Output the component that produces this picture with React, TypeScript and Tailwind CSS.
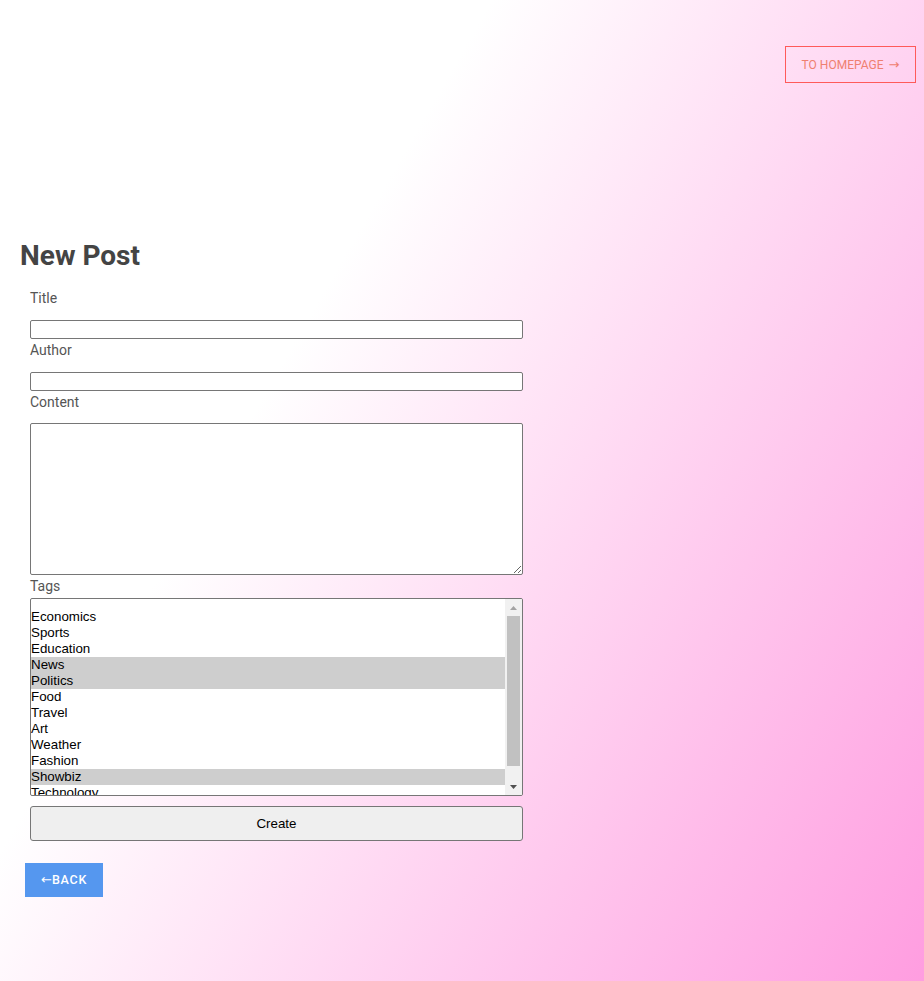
import React from "react";

const TAGS = [
  "Economics",
  "Sports",
  "Education",
  "News",
  "Politics",
  "Food",
  "Travel",
  "Art",
  "Weather",
  "Fashion",
  "Showbiz",
  "Technology",
];

const SELECTED = ["News", "Politics", "Showbiz"];

export default function App() {
  return (
    <div
      className="min-h-[981px] w-full bg-[linear-gradient(120deg,#ffffff_33%,#ff9de0_100%)]"
      style={{ fontFamily: "Roboto, 'Liberation Sans', sans-serif" }}
    >
      {/* top bar */}
      <div className="flex justify-end pt-[46px] pr-[8px]">
        <button className="h-[37px] w-[131px] border border-[#ff5a5a] text-[12px] text-[#ef8070] uppercase flex items-center justify-center gap-[5px]">
          To homepage{" "}
          <span className="text-[13px]" style={{ fontFamily: "'DejaVu Sans', sans-serif" }}>
            →
          </span>
        </button>
      </div>

      <h1 className="mt-[156px] ml-[20px] text-[28px] leading-[34px] font-bold text-[#444]">New Post</h1>

      {/* form */}
      <form className="ml-[30px] mt-[14px] w-[493px] flex flex-col text-[14px] text-[#555]">
        <label className="h-[20px] leading-[20px] pt-[1px] mb-[13px]">Title</label>
        <input
          type="text"
          className="h-[19px] bg-white border border-[#767676] rounded-[2px]"
        />
        <label className="h-[20px] leading-[20px] pt-[1px] mb-[13px]">Author</label>
        <input
          type="text"
          className="h-[19px] bg-white border border-[#767676] rounded-[2px]"
        />
        <label className="h-[20px] leading-[20px] pt-[1px] mb-[12px]">Content</label>
        <textarea className="h-[152px] bg-white border border-[#767676] rounded-[2px] resize" />
        <label className="h-[20px] leading-[20px] pt-[1px] mb-[3px]">Tags</label>

        {/* tags listbox */}
        <div
          role="listbox"
          aria-multiselectable="true"
          className="h-[198px] bg-white border border-[#767676] rounded-[2px] flex overflow-hidden text-black text-[13.33px]"
          style={{ fontFamily: "'Liberation Sans', Arial, sans-serif" }}
        >
          <div className="flex-1 pt-[10px] overflow-hidden">
            {TAGS.map((t) => (
              <div
                key={t}
                role="option"
                aria-selected={SELECTED.includes(t)}
                className={
                  "h-[16px] leading-[16px] whitespace-nowrap " +
                  (SELECTED.includes(t) ? "bg-[#cecece]" : "")
                }
              >
                {t}
              </div>
            ))}
          </div>
          <div className="w-[17px] bg-[#f1f1f1] flex flex-col items-center">
            <div className="h-[17px] w-full flex items-center justify-center">
              <svg width="7" height="4" viewBox="0 0 7 4">
                <path d="M3.5 0 L7 4 L0 4 Z" fill="#a3a3a3" />
              </svg>
            </div>
            <div className="h-[150px] w-[13px] bg-[#c1c1c1]" />
            <div className="flex-1" />
            <div className="h-[17px] w-full flex items-center justify-center">
              <svg width="7" height="4" viewBox="0 0 7 4">
                <path d="M0 0 L7 0 L3.5 4 Z" fill="#505050" />
              </svg>
            </div>
          </div>
        </div>

        <button
          type="button"
          className="mt-[10px] h-[35px] bg-[#efefef] border border-[#767676] rounded-[3px] text-black text-[13.33px]"
          style={{ fontFamily: "'Liberation Sans', Arial, sans-serif" }}
        >
          Create
        </button>
      </form>

      <button className="mt-[22px] ml-[25px] h-[34px] w-[78px] bg-[#5597ef] text-white text-[12.5px] font-medium tracking-[0.06em] flex items-center justify-center">
        <span className="text-[13px] tracking-normal" style={{ fontFamily: "'DejaVu Sans', sans-serif" }}>
          ←
        </span>
        BACK
      </button>
    </div>
  );
}
